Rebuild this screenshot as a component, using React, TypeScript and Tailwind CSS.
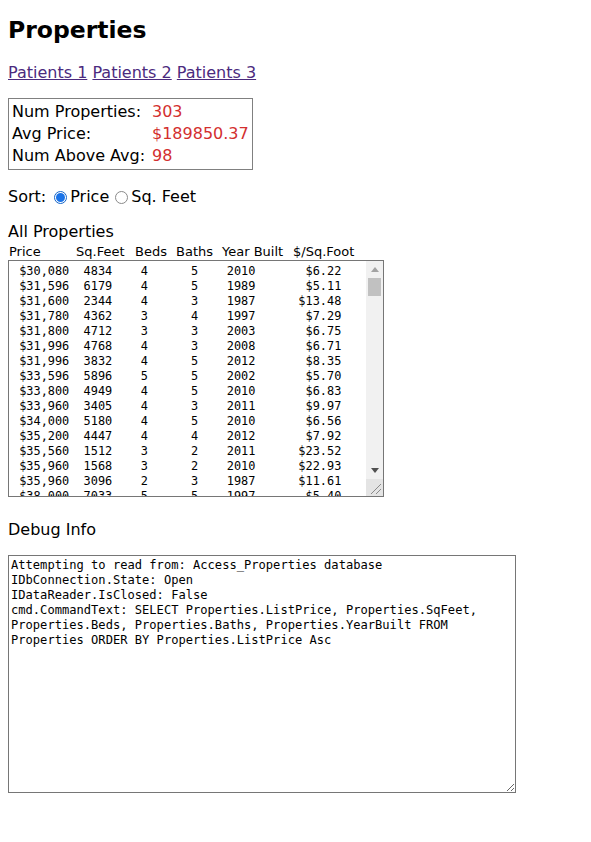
import React from 'react';

interface Property {
  price: string;
  sqft: string;
  beds: string;
  baths: string;
  year: string;
  perFoot: string;
}

const properties: Property[] = [
  { price: '$30,080', sqft: '4834', beds: '4', baths: '5', year: '2010', perFoot: '$6.22' },
  { price: '$31,596', sqft: '6179', beds: '4', baths: '5', year: '1989', perFoot: '$5.11' },
  { price: '$31,600', sqft: '2344', beds: '4', baths: '3', year: '1987', perFoot: '$13.48' },
  { price: '$31,780', sqft: '4362', beds: '3', baths: '4', year: '1997', perFoot: '$7.29' },
  { price: '$31,800', sqft: '4712', beds: '3', baths: '3', year: '2003', perFoot: '$6.75' },
  { price: '$31,996', sqft: '4768', beds: '4', baths: '3', year: '2008', perFoot: '$6.71' },
  { price: '$31,996', sqft: '3832', beds: '4', baths: '5', year: '2012', perFoot: '$8.35' },
  { price: '$33,596', sqft: '5896', beds: '5', baths: '5', year: '2002', perFoot: '$5.70' },
  { price: '$33,800', sqft: '4949', beds: '4', baths: '5', year: '2010', perFoot: '$6.83' },
  { price: '$33,960', sqft: '3405', beds: '4', baths: '3', year: '2011', perFoot: '$9.97' },
  { price: '$34,000', sqft: '5180', beds: '4', baths: '5', year: '2010', perFoot: '$6.56' },
  { price: '$35,200', sqft: '4447', beds: '4', baths: '4', year: '2012', perFoot: '$7.92' },
  { price: '$35,560', sqft: '1512', beds: '3', baths: '2', year: '2011', perFoot: '$23.52' },
  { price: '$35,960', sqft: '1568', beds: '3', baths: '2', year: '2010', perFoot: '$22.93' },
  { price: '$35,960', sqft: '3096', beds: '2', baths: '3', year: '1987', perFoot: '$11.61' },
  { price: '$38,000', sqft: '7033', beds: '5', baths: '5', year: '1997', perFoot: '$5.40' }
];

const debugText =
  'Attempting to read from: Access_Properties database\n' +
  'IDbConnection.State: Open\n' +
  'IDataReader.IsClosed: False\n' +
  'cmd.CommandText: SELECT Properties.ListPrice, Properties.SqFeet, Properties.Beds, Properties.Baths, Properties.YearBuilt FROM Properties ORDER BY Properties.ListPrice Asc';

// one padded line per row, like the original list control
const formatRow = (p: Property) =>
  ' ' +
  p.price.padEnd(9) +
  p.sqft.padEnd(8) +
  p.beds.padEnd(7) +
  p.baths.padEnd(5) +
  p.year +
  p.perFoot.padStart(12);

const Radio: React.FC<{ checked?: boolean }> = ({ checked }) =>
  checked ? (
    <span className="flex h-[13px] w-[13px] items-center justify-center rounded-full border border-[#1565c8] bg-white">
      <span className="block h-[9px] w-[9px] rounded-full bg-[#1a73e8]" />
    </span>
  ) : (
    <span className="block h-[13px] w-[13px] rounded-full border border-[#8a8a8a] bg-white" />
  );

const FakeScrollbar: React.FC = () => (
  <div className="flex w-[17px] flex-col bg-[#f1f1f1]">
    <div className="flex h-[17px] items-center justify-center">
      <svg width="8" height="5" viewBox="0 0 8 5">
        <polygon points="0,5 4,0 8,5" fill="#a3a3a3" />
      </svg>
    </div>
    <div className="mx-[2px] h-[18px] bg-[#c1c1c1]" />
    <div className="flex-1" />
    <div className="flex h-[17px] items-center justify-center">
      <svg width="8" height="5" viewBox="0 0 8 5">
        <polygon points="0,0 8,0 4,5" fill="#505050" />
      </svg>
    </div>
    <div className="h-[17px] bg-[#e4e4e4]">
      <svg width="17" height="17" viewBox="0 0 17 17">
        <line x1="5" y1="15" x2="15" y2="5" stroke="#8a8a8a" strokeWidth="1" />
        <line x1="10" y1="15" x2="15" y2="10" stroke="#8a8a8a" strokeWidth="1" />
      </svg>
    </div>
  </div>
);

const App: React.FC = () => {
  return (
    <div className="min-h-[842px] bg-white px-[8px] font-['DejaVu_Sans',sans-serif] text-black">
      <h1 className="pt-[16px] text-[23.5px] leading-[28px] font-bold">Properties</h1>

      <div className="mt-[19px] text-[16px] leading-[20px]">
        <a href="#" className="text-[#4b2a7e] underline">Patients 1</a>{' '}
        <a href="#" className="text-[#4b2a7e] underline">Patients 2</a>{' '}
        <a href="#" className="text-[#4b2a7e] underline">Patients 3</a>
      </div>

      <div className="mt-[15px] w-[245px] border border-[#808080] px-[3px] py-[2px] text-[16px] leading-[22px]">
        <div className="flex">
          <span className="w-[140px]">Num Properties:</span>
          <span className="text-[#d32f2f]">303</span>
        </div>
        <div className="flex">
          <span className="w-[140px]">Avg Price:</span>
          <span className="text-[#d32f2f]">$189850.37</span>
        </div>
        <div className="flex">
          <span className="w-[140px]">Num Above Avg:</span>
          <span className="text-[#d32f2f]">98</span>
        </div>
      </div>

      <div className="mt-[17px] flex h-[20px] items-center text-[16px] leading-[20px]">
        <span>Sort:</span>
        <span className="ml-[8px] mr-[3px]"><Radio checked /></span>
        <span>Price</span>
        <span className="ml-[6px] mr-[3px]"><Radio /></span>
        <span>Sq. Feet</span>
      </div>

      <div className="mt-[15px] text-[16px] leading-[20px]">All Properties</div>

      <div className="mt-[2px] flex pl-[1px] text-[13px] leading-[16px]">
        <span className="w-[67px]">Price</span>
        <span className="w-[59px]">Sq.Feet</span>
        <span className="w-[41px]">Beds</span>
        <span className="w-[46px]">Baths</span>
        <span className="w-[71px]">Year Built</span>
        <span>$/Sq.Foot</span>
      </div>

      <div className="flex h-[237px] w-[376px] border border-[#767676]">
        <div className="flex-1 overflow-hidden pl-[3px] pt-[3px]">
          <pre className="font-['DejaVu_Sans_Mono',monospace] text-[11.9px] leading-[15px]">
            {properties.map(formatRow).join('\n')}
          </pre>
        </div>
        <FakeScrollbar />
      </div>

      <div className="mt-[23px] text-[16px] leading-[20px]">Debug Info</div>

      <textarea
        readOnly
        defaultValue={debugText}
        className="mt-[15px] block h-[238px] w-[508px] resize border border-[#767676] p-[2px] font-['DejaVu_Sans_Mono',monospace] text-[12.1px] leading-[15px] text-black outline-none"
      />
    </div>
  );
};

export default App;
